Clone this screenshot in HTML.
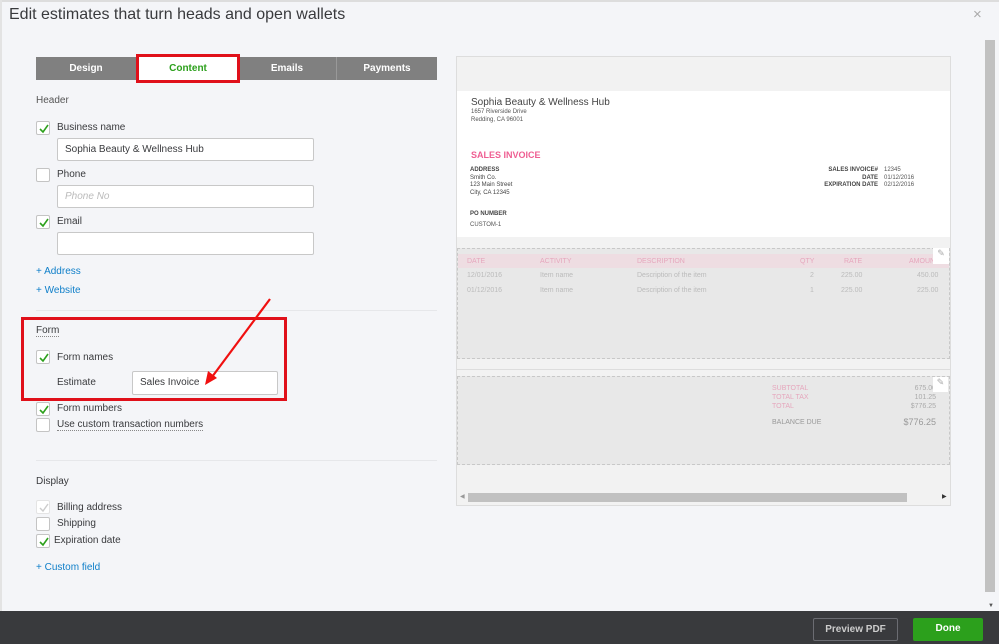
<!DOCTYPE html>
<html><head><meta charset="utf-8"><style>
*{box-sizing:border-box;margin:0;padding:0}
body{width:999px;height:644px;overflow:hidden;background:#f4f5f8;font-family:"Liberation Sans",sans-serif;position:relative;color:#393a3d}
.a{position:absolute}
.cb{position:absolute;width:14px;height:14px;border:1px solid #c4c4c4;background:#fff;border-radius:2px}
.cb svg{position:absolute;left:1px;top:1px}
.lbl{position:absolute;font-size:10px;color:#393a3d;margin-top:1px}
.inp{position:absolute;background:#fff;border:1px solid #c8c8c8;border-radius:2px;font-size:10px;padding-left:7px;line-height:22px;color:#393a3d}
.link{position:absolute;font-size:10px;color:#0f7fc9}
.pv{font-size:7px;color:#bbb;position:absolute}
.pk{color:#e6a7bd}
</style></head><body>
<div class="a" style="left:0;top:0;width:999px;height:2px;background:#ddd"></div>
<div class="a" style="left:0;top:0;width:2px;height:612px;background:#e3e3e3"></div>
<div class="a" style="left:9px;top:6px;font-size:16px;color:#393a3d">Edit estimates that turn heads and open wallets</div>
<div class="a" style="left:973px;top:6px;font-size:15px;color:#aaa">×</div>
<div class="a" style="left:985px;top:40px;width:10px;height:552px;background:#c1c1c1"></div>
<div class="a" style="left:988px;top:603px;font-size:6px;color:#555">▼</div>
<div class="a" style="left:36px;top:57px;width:401px;height:23px;background:#808080"></div>
<div class="a" style="left:36px;top:57px;width:100px;height:23px;color:#fff;font-size:10px;font-weight:bold;text-align:center;line-height:23px">Design</div>
<div class="a" style="left:238px;top:57px;width:99px;height:23px;color:#fff;font-size:10px;font-weight:bold;text-align:center;line-height:23px;border-right:1px solid #999">Emails</div>
<div class="a" style="left:337px;top:57px;width:100px;height:23px;color:#fff;font-size:10px;font-weight:bold;text-align:center;line-height:23px">Payments</div>
<div class="a" style="left:136px;top:54px;width:104px;height:29px;background:#fff;border:3px solid #e0101a;color:#2ca01c;font-size:10px;font-weight:bold;text-align:center;line-height:23px">Content</div>
<div class="a" style="left:36px;top:95px;font-size:10px;color:#555">Header</div>
<div class="cb" style="left:36px;top:121px"><svg width="12" height="12"><path d="M2 6l3 3 5-7" stroke="#2ca01c" stroke-width="1.6" fill="none"/></svg></div>
<div class="lbl" style="left:57px;top:121px">Business name</div>
<div class="inp" style="left:57px;top:138px;width:257px;height:23px">Sophia Beauty &amp; Wellness Hub</div>
<div class="cb" style="left:36px;top:168px"></div>
<div class="lbl" style="left:57px;top:168px">Phone</div>
<div class="inp" style="left:57px;top:185px;width:257px;height:23px;color:#bbb;font-style:italic">Phone No</div>
<div class="cb" style="left:36px;top:215px"><svg width="12" height="12"><path d="M2 6l3 3 5-7" stroke="#2ca01c" stroke-width="1.6" fill="none"/></svg></div>
<div class="lbl" style="left:57px;top:215px">Email</div>
<div class="inp" style="left:57px;top:232px;width:257px;height:23px"></div>
<div class="link" style="left:36px;top:266px">+ Address</div>
<div class="link" style="left:36px;top:285px">+ Website</div>
<div class="a" style="left:36px;top:310px;width:401px;height:1px;background:#e6e7ea"></div>
<div class="a" style="left:21px;top:317px;width:266px;height:84px;border:3px solid #e0101a"></div>
<div class="lbl" style="left:36px;top:324px;border-bottom:1px dotted #888">Form</div>
<div class="cb" style="left:36px;top:350px"><svg width="12" height="12"><path d="M2 6l3 3 5-7" stroke="#2ca01c" stroke-width="1.6" fill="none"/></svg></div>
<div class="lbl" style="left:57px;top:351px">Form names</div>
<div class="lbl" style="left:57px;top:376px">Estimate</div>
<div class="inp" style="left:132px;top:371px;width:146px;height:24px">Sales Invoice</div>
<svg class="a" style="left:200px;top:295px" width="75" height="95"><path d="M70 4L9 86" stroke="#f01010" stroke-width="2.2"/><path d="M5 90l3-14 9 7z" fill="#f01010"/></svg>
<div class="cb" style="left:36px;top:402px"><svg width="12" height="12"><path d="M2 6l3 3 5-7" stroke="#2ca01c" stroke-width="1.6" fill="none"/></svg></div>
<div class="lbl" style="left:57px;top:402px">Form numbers</div>
<div class="cb" style="left:36px;top:418px"></div>
<div class="lbl" style="left:57px;top:418px;border-bottom:1px dotted #888">Use custom transaction numbers</div>
<div class="a" style="left:36px;top:460px;width:401px;height:1px;background:#e6e7ea"></div>
<div class="lbl" style="left:36px;top:475px">Display</div>
<div class="cb" style="left:36px;top:500px;border-color:#e4e4e4"><svg width="12" height="12"><path d="M2 6l3 3 5-7" stroke="#ccc" stroke-width="1.4" fill="none"/></svg></div>
<div class="lbl" style="left:57px;top:501px">Billing address</div>
<div class="cb" style="left:36px;top:517px"></div>
<div class="lbl" style="left:57px;top:517px">Shipping</div>
<div class="cb" style="left:36px;top:534px"><svg width="12" height="12"><path d="M2 6l3 3 5-7" stroke="#2ca01c" stroke-width="1.6" fill="none"/></svg></div>
<div class="lbl" style="left:54px;top:534px">Expiration date</div>
<div class="link" style="left:36px;top:562px">+ Custom field</div>
<div class="a" style="left:456px;top:56px;width:495px;height:450px;background:#f2f2f2;border:1px solid #ddd"></div>
<div class="a" style="left:457px;top:91px;width:493px;height:146px;background:#fff"></div>
<div class="a" style="left:471px;top:97px;font-size:10px;color:#444">Sophia Beauty &amp; Wellness Hub</div>
<div class="a" style="left:471px;top:109px;font-size:6px;color:#555;line-height:7.5px">1657 Riverside Drive<br>Redding, CA 96001</div>
<div class="a" style="left:471px;top:150px;font-size:9px;font-weight:bold;color:#ef5e92">SALES INVOICE</div>
<div class="a" style="left:470px;top:167px;font-size:6px;color:#444;line-height:7.7px"><b>ADDRESS</b><br>Smith Co.<br>123 Main Street<br>City, CA 12345</div>
<div class="a" style="left:800px;top:167px;font-size:6px;color:#444;line-height:7.7px;text-align:right;width:78px;font-weight:bold">SALES INVOICE#<br>DATE<br>EXPIRATION DATE</div>
<div class="a" style="left:884px;top:167px;font-size:6px;color:#555;line-height:7.7px">12345<br>01/12/2016<br>02/12/2016</div>
<div class="a" style="left:470px;top:211px;font-size:6px;color:#444;font-weight:bold">PO NUMBER</div>
<div class="a" style="left:470px;top:222px;font-size:6px;color:#555">CUSTOM-1</div>
<div class="a" style="left:457px;top:248px;width:493px;height:111px;background:#e8e8e8;border:1px dashed #c8c8c8"></div>
<div class="a" style="left:458px;top:254px;width:491px;height:14px;background:#eedde2"></div>
<div class="pv pk" style="left:467px;top:258px">DATE</div>
<div class="pv pk" style="left:540px;top:258px">ACTIVITY</div>
<div class="pv pk" style="left:637px;top:258px">DESCRIPTION</div>
<div class="pv pk" style="left:800px;top:258px">QTY</div>
<div class="pv pk" style="left:844px;top:258px">RATE</div>
<div class="pv pk" style="left:909px;top:258px">AMOUNT</div>
<div class="pv" style="left:467px;top:272px">12/01/2016</div><div class="pv" style="left:540px;top:272px">Item name</div><div class="pv" style="left:637px;top:272px">Description of the item</div><div class="pv" style="left:810px;top:272px">2</div><div class="pv" style="left:841px;top:272px">225.00</div><div class="pv" style="left:917px;top:272px">450.00</div>
<div class="pv" style="left:467px;top:287px">01/12/2016</div><div class="pv" style="left:540px;top:287px">Item name</div><div class="pv" style="left:637px;top:287px">Description of the item</div><div class="pv" style="left:810px;top:287px">1</div><div class="pv" style="left:841px;top:287px">225.00</div><div class="pv" style="left:917px;top:287px">225.00</div>
<div class="a" style="left:933px;top:248px;width:16px;height:16px;background:#fff;color:#aaa;font-size:9px;text-align:center">✎</div>
<div class="a" style="left:457px;top:369px;width:493px;height:1px;background:#ddd"></div>
<div class="a" style="left:457px;top:376px;width:493px;height:89px;background:#e8e8e8;border:1px dashed #c8c8c8"></div>
<div class="pv pk" style="left:772px;top:384px;line-height:9px">SUBTOTAL<br>TOTAL TAX<br>TOTAL</div>
<div class="pv" style="left:900px;top:384px;line-height:9px;text-align:right;width:36px;color:#aaa">675.00<br>101.25<br>$776.25</div>
<div class="pv" style="left:772px;top:419px;color:#999">BALANCE DUE</div>
<div class="a" style="left:900px;top:417px;font-size:9px;color:#999;width:36px;text-align:right">$776.25</div>
<div class="a" style="left:933px;top:377px;width:15px;height:15px;background:#fff;color:#aaa;font-size:9px;text-align:center">✎</div>
<div class="a" style="left:468px;top:493px;width:439px;height:9px;background:#c1c1c1"></div>
<div class="a" style="left:460px;top:493px;font-size:6px;color:#999">◀</div>
<div class="a" style="left:942px;top:493px;font-size:6px;color:#333">▶</div>
<div class="a" style="left:0;top:611px;width:999px;height:33px;background:#393a3d"></div>
<div class="a" style="left:813px;top:618px;width:85px;height:23px;border:1px solid #6b6c72;border-radius:2px;color:#ccc;font-size:10px;font-weight:bold;text-align:center;line-height:21px">Preview PDF</div>
<div class="a" style="left:913px;top:618px;width:70px;height:23px;background:#2ca01c;border-radius:2px;color:#fff;font-size:10px;font-weight:bold;text-align:center;line-height:21px">Done</div>
</body></html>
